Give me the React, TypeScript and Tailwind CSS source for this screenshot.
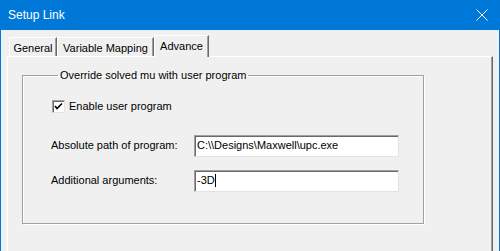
import React from "react";

const font = { fontFamily: '"Liberation Sans", Arial, sans-serif' };

function Tab({ label, width, active }: { label: string; width: string; active?: boolean }) {
  if (active) {
    return (
      <div
        className={`${width} h-[22px] -mb-px relative z-10 bg-[#f0f0f0] border-l border-t border-white border-r border-r-[#696969] shadow-[inset_-1px_0_0_#a0a0a0] flex items-start justify-center pt-[2px] text-[11px] text-black`}
      >
        {label}
      </div>
    );
  }
  return (
    <div
      className={`${width} h-[19px] bg-[#f0f0f0] border-l border-t border-white border-r border-r-[#696969] shadow-[inset_-1px_0_0_#a0a0a0] flex items-start justify-center pt-[2px] text-[11px] text-black`}
    >
      {label}
    </div>
  );
}

function SunkenInput({ children }: { children: React.ReactNode }) {
  return (
    <div className="w-[205px] h-[22px] bg-white border border-t-[#a0a0a0] border-l-[#a0a0a0] border-b-[#e3e3e3] border-r-[#e3e3e3] shadow-[inset_1px_1px_0_#696969] flex items-center pl-[2px] text-[11px] text-black">
      {children}
    </div>
  );
}

export default function App() {
  return (
    <div className="w-[500px] h-[251px] overflow-hidden bg-[#f0f0f0] flex flex-col" style={font}>
      {/* title bar */}
      <div className="h-[30px] shrink-0 bg-[#0078d7] flex items-center justify-between pl-[8px] pr-[12px]">
        <span className="text-[12px] text-white">Setup Link</span>
        <svg width="12" height="12" viewBox="0 0 12 12">
          <path d="M0.5 0.5 L11.5 11.5 M11.5 0.5 L0.5 11.5" stroke="#fff" strokeWidth="1" />
        </svg>
      </div>

      {/* body */}
      <div className="flex-1 flex flex-col border-x border-[#0078d7] px-[6px] pt-[5px]">
        <div className="flex items-end pl-[2px]">
          <Tab label="General" width="w-[48px]" />
          <Tab label="Variable Mapping" width="w-[97px]" />
          <Tab label="Advance" width="w-[55px]" active />
        </div>

        <div className="flex-1 border-t border-l border-white border-r border-r-[#696969] shadow-[inset_-1px_0_0_#a0a0a0] pl-[14px] pt-[12px]">
          <fieldset className="w-[402px] h-[155px] border border-[#a0a0a0] shadow-[1px_1px_0_#fff,inset_1px_1px_0_#fff] pl-[29px]">
            <legend className="ml-[6px] px-[2px] text-[11px] text-black leading-[13px]">
              Override solved mu with user program
            </legend>

            <div className="flex items-center gap-[4px] mt-[16px]">
              <div className="w-[13px] h-[13px] bg-white border border-t-[#a0a0a0] border-l-[#a0a0a0] border-b-[#e3e3e3] border-r-[#e3e3e3] shadow-[inset_1px_1px_0_#696969] flex items-center justify-center">
                <svg width="9" height="9" viewBox="0 0 9 9">
                  <path d="M1 4 L3 6.5 L8 1.5" fill="none" stroke="#000" strokeWidth="1.6" />
                </svg>
              </div>
              <span className="text-[11px] text-black">Enable user program</span>
            </div>

            <div className="flex items-center mt-[20px] -ml-[1px]">
              <span className="w-[143px] text-[11px] text-black">Absolute path of program:</span>
              <SunkenInput>{"C:\\\\Designs\\Maxwell\\upc.exe"}</SunkenInput>
            </div>

            <div className="flex items-center mt-[13px] -ml-[1px]">
              <span className="w-[143px] text-[11px] text-black">Additional arguments:</span>
              <SunkenInput>
                -3D<span className="inline-block w-px h-[13px] bg-black" />
              </SunkenInput>
            </div>
          </fieldset>
        </div>
      </div>
    </div>
  );
}
